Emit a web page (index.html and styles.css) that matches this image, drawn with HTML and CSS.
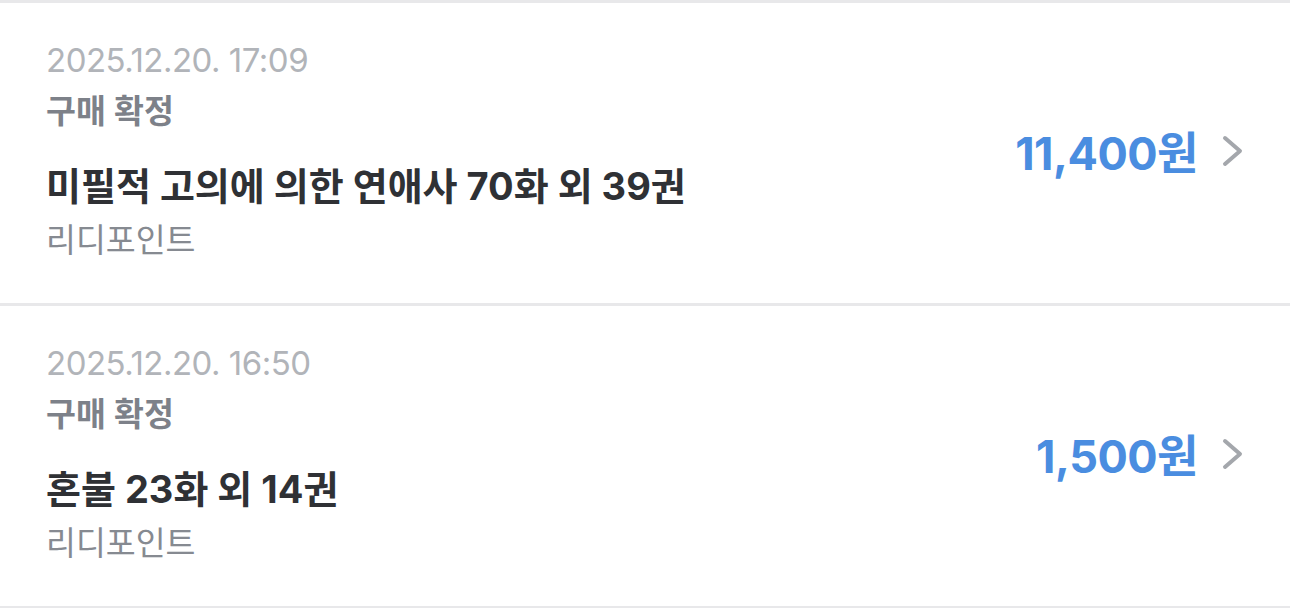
FILE: index.html
```html
<!DOCTYPE html>
<html lang="ko">
<head>
<meta charset="utf-8">
<link rel="stylesheet" href="styles.css">
</head>
<body>
<ul class="list">
  <li class="item">
    <div class="info">
      <div class="date">2025.12.20. 17:09</div>
      <div class="status">구매 확정</div>
      <div class="title">미필적 고의에 의한 연애사 70화 외 39권</div>
      <div class="method">리디포인트</div>
    </div>
    <div class="amount">
      <span class="price">11,400원</span>
      <svg class="chev" width="22" height="32" viewBox="0 0 22 32"><path d="M3 3 L18 16 L3 29" fill="none" stroke="#a4a7ac" stroke-width="4" stroke-linecap="round" stroke-linejoin="round"/></svg>
    </div>
  </li>
  <li class="item">
    <div class="info">
      <div class="date">2025.12.20. 16:50</div>
      <div class="status">구매 확정</div>
      <div class="title">혼불 23화 외 14권</div>
      <div class="method">리디포인트</div>
    </div>
    <div class="amount">
      <span class="price">1,500원</span>
      <svg class="chev" width="22" height="32" viewBox="0 0 22 32"><path d="M3 3 L18 16 L3 29" fill="none" stroke="#a4a7ac" stroke-width="4" stroke-linecap="round" stroke-linejoin="round"/></svg>
    </div>
  </li>
</ul>
</body>
</html>
```

FILE: styles.css
```css
html, body {
  margin: 0;
  padding: 0;
  background: #ffffff;
}
body {
  font-family: Inter, "Noto Sans CJK KR", sans-serif;
}
.list {
  list-style: none;
  margin: 0;
  padding: 0;
  border-top: 3px solid #e8e8ea;
}
.item {
  display: flex;
  align-items: center;
  justify-content: space-between;
  padding: 31px 46px 36px 46px;
  border-bottom: 3px solid #e8e8ea;
}
.info {
  display: flex;
  flex-direction: column;
}
.date {
  font-size: 33px;
  line-height: 52px;
  color: #b1b4b9;
  letter-spacing: -0.5px;
}
.status {
  font-size: 32.5px;
  line-height: 52px;
  font-weight: 600;
  color: #7d8189;
}
.title {
  margin-top: 22px;
  font-size: 38px;
  line-height: 52px;
  font-weight: 700;
  color: #2f3135;
}
.method {
  margin-top: 3px;
  font-size: 32.5px;
  line-height: 52px;
  color: #868a91;
}
.amount {
  display: flex;
  align-items: center;
  gap: 24px;
}
.price {
  font-size: 45px;
  font-weight: 700;
  color: #4a8de0;
  letter-spacing: -0.5px;
}
.chev {
  display: block;
}
```
